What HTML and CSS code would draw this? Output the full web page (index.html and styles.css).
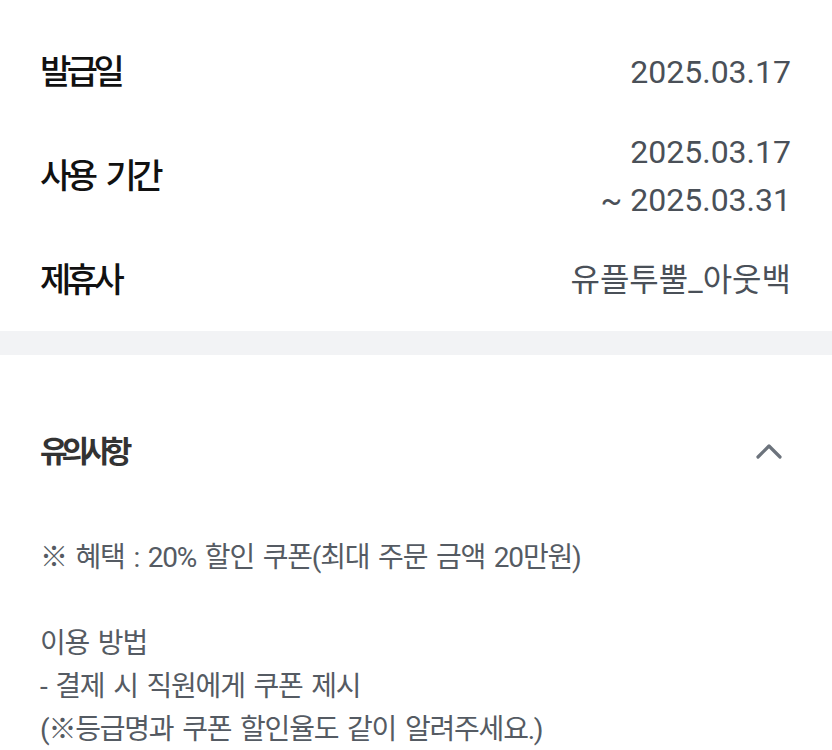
FILE: index.html
```html
<!DOCTYPE html>
<html lang="ko">
<head>
    <meta charset="UTF-8">
    <meta name="viewport" content="width=device-width, initial-scale=1.0">
    <title>쿠폰 상세</title>
    <link rel="stylesheet" href="styles.css">
</head>
<body>
    <div class="info">
        <div class="info-row">
            <div class="label">발급일</div>
            <div class="value">2025.03.17</div>
        </div>
        <div class="info-row">
            <div class="label">사용 기간</div>
            <div class="value">2025.03.17<br>~ 2025.03.31</div>
        </div>
        <div class="info-row">
            <div class="label">제휴사</div>
            <div class="value">유플투뿔_아웃백</div>
        </div>
    </div>

    <div class="divider"></div>

    <div class="notice">
        <div class="notice-head">
            <h2>유의사항</h2>
            <svg class="chevron" width="30" height="30" viewBox="0 0 30 30">
                <polyline points="4,20 15,9 26,20" fill="none" stroke="#6c737c" stroke-width="3.2" stroke-linecap="round" stroke-linejoin="round"/>
            </svg>
        </div>
        <div class="notice-body">
            <p>※ 혜택 : 20% 할인 쿠폰(최대 주문 금액 20만원)</p>
            <p>&nbsp;</p>
            <p>이용 방법</p>
            <p>- 결제 시 직원에게 쿠폰 제시</p>
            <p>(※등급명과 쿠폰 할인율도 같이 알려주세요.)</p>
        </div>
    </div>
</body>
</html>
```

FILE: styles.css
```css
body {
    margin: 0;
    background-color: white;
    font-family: Roboto, "Noto Sans CJK KR", sans-serif;
}
.info {
    padding: 32px 41px 11px 40px;
}
.info-row {
    display: flex;
    justify-content: space-between;
    align-items: center;
    padding: 16px 0;
}
.label {
    font-size: 34px;
    font-weight: 500;
    color: #111111;
    letter-spacing: -4.5px;
    word-spacing: 8px;
    line-height: 48px;
}
.value {
    font-size: 32px;
    color: #4a5058;
    text-align: right;
    line-height: 48px;
}
.divider {
    height: 24px;
    background-color: #f2f3f5;
}
.notice {
    padding: 0 40px;
}
.notice-head {
    display: flex;
    justify-content: space-between;
    align-items: center;
    padding: 77px 0 64px;
}
.notice-head h2 {
    margin: 0;
    font-size: 30px;
    font-weight: 700;
    color: #333333;
    letter-spacing: -6px;
    line-height: 40px;
}
.chevron {
    margin-right: 8px;
}
.notice-body p {
    margin: 0;
    font-size: 28px;
    color: #555b63;
    letter-spacing: -1.2px;
    word-spacing: 3px;
    line-height: 43px;
}
```
